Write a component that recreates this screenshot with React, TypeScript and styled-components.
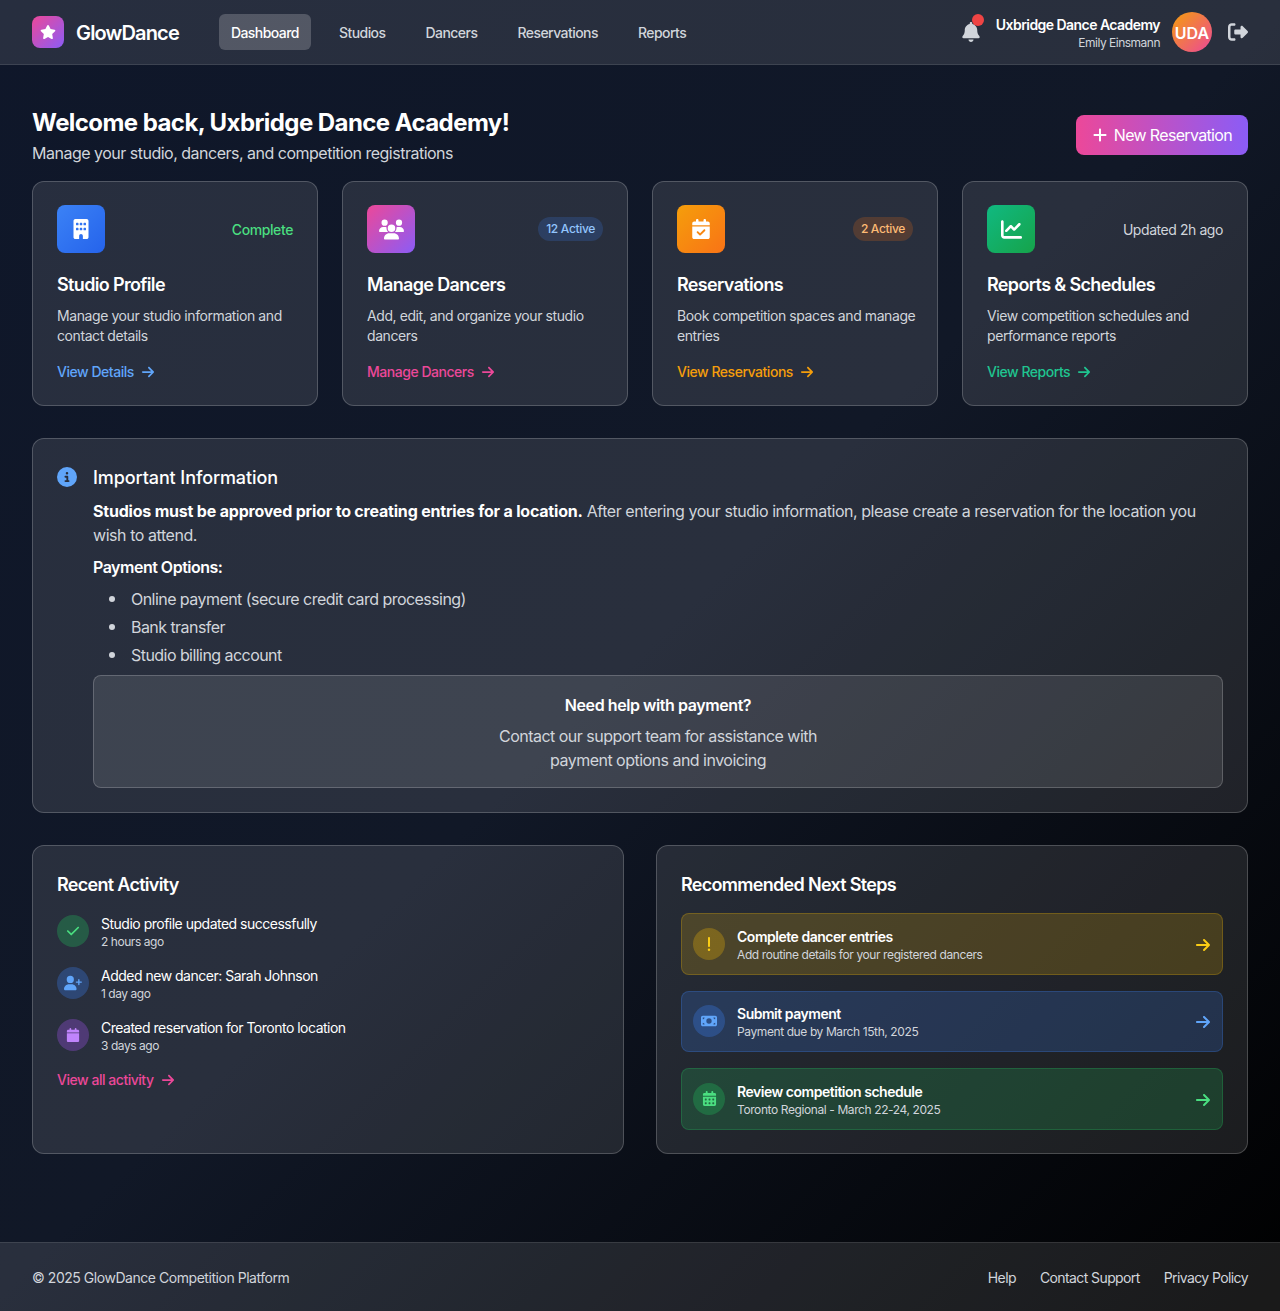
import React from 'react';
import styled, { createGlobalStyle } from 'styled-components';
import {
  FaArrowRight,
  FaBell,
  FaBuilding,
  FaCalendar,
  FaCalendarCheck,
  FaCalendarDays,
  FaChartLine,
  FaCheck,
  FaCircleInfo,
  FaExclamation,
  FaMoneyBill,
  FaPlus,
  FaRightFromBracket,
  FaStar,
  FaUserPlus,
  FaUsers
} from 'react-icons/fa6';

const GlobalStyle = createGlobalStyle`
  * {
    box-sizing: border-box;
  }

  html, body {
    margin: 0;
    padding: 0;
  }

  body {
    font-family: Inter, 'Noto Sans', sans-serif;
    color: #fff;
    background: #000;
  }
`;

const TINTS = {
  blue: { text: '#60a5fa', rgb: '59, 130, 246', from: '#3b82f6', to: '#2563eb' },
  pink: { text: '#ec4899', rgb: '236, 72, 153', from: '#ec4899', to: '#8b5cf6' },
  orange: { text: '#f59e0b', rgb: '249, 115, 22', from: '#f59e0b', to: '#f97316' },
  green: { text: '#1fc590', rgb: '34, 197, 94', from: '#10b981', to: '#16a34a' },
  yellow: { text: '#facc15', rgb: '234, 179, 8', from: '#eab308', to: '#eab308' },
  purple: { text: '#c084fc', rgb: '168, 85, 247', from: '#a855f7', to: '#a855f7' },
  lime: { text: '#4ade80', rgb: '34, 197, 94', from: '#22c55e', to: '#22c55e' }
};

type Tint = keyof typeof TINTS;

const cards: {
  tint: Tint;
  icon: React.ReactNode;
  title: string;
  text: string;
  link: string;
  status: React.ReactNode;
}[] = [
  {
    tint: 'blue',
    icon: <FaBuilding size={20} />,
    title: 'Studio Profile',
    text: 'Manage your studio information and contact details',
    link: 'View Details',
    status: <StatusDone>Complete</StatusDone>
  },
  {
    tint: 'pink',
    icon: <FaUsers size={25} />,
    title: 'Manage Dancers',
    text: 'Add, edit, and organize your studio dancers',
    link: 'Manage Dancers',
    status: <Badge $tone="blue">12 Active</Badge>
  },
  {
    tint: 'orange',
    icon: <FaCalendarCheck size={20} />,
    title: 'Reservations',
    text: 'Book competition spaces and manage entries',
    link: 'View Reservations',
    status: <Badge $tone="orange">2 Active</Badge>
  },
  {
    tint: 'green',
    icon: <FaChartLine size={21} />,
    title: 'Reports & Schedules',
    text: 'View competition schedules and performance reports',
    link: 'View Reports',
    status: <StatusMuted>Updated 2h ago</StatusMuted>
  }
];

const activity: { tint: Tint; icon: React.ReactNode; title: string; time: string }[] = [
  { tint: 'lime', icon: <FaCheck size={14} />, title: 'Studio profile updated successfully', time: '2 hours ago' },
  { tint: 'blue', icon: <FaUserPlus size={18} />, title: 'Added new dancer: Sarah Johnson', time: '1 day ago' },
  { tint: 'purple', icon: <FaCalendar size={14} />, title: 'Created reservation for Toronto location', time: '3 days ago' }
];

const steps: { tint: Tint; icon: React.ReactNode; title: string; text: string }[] = [
  { tint: 'yellow', icon: <FaExclamation size={16} />, title: 'Complete dancer entries', text: 'Add routine details for your registered dancers' },
  { tint: 'blue', icon: <FaMoneyBill size={16} />, title: 'Submit payment', text: 'Payment due by March 15th, 2025' },
  { tint: 'lime', icon: <FaCalendarDays size={15} />, title: 'Review competition schedule', text: 'Toronto Regional - March 22-24, 2025' }
];

export default function App() {
  return (
    <Page>
      <GlobalStyle />
      <Header>
        <HeaderLeft>
          <Brand>
            <BrandMark>
              <FaStar size={16} />
            </BrandMark>
            <BrandName>GlowDance</BrandName>
          </Brand>
          <Nav>
            <NavItem $active>Dashboard</NavItem>
            <NavItem>Studios</NavItem>
            <NavItem>Dancers</NavItem>
            <NavItem>Reservations</NavItem>
            <NavItem>Reports</NavItem>
          </Nav>
        </HeaderLeft>
        <HeaderRight>
          <BellButton>
            <FaBell size={20} />
            <BellDot />
          </BellButton>
          <UserBlock>
            <UserName>Uxbridge Dance Academy</UserName>
            <UserSub>Emily Einsmann</UserSub>
          </UserBlock>
          <Avatar>UDA</Avatar>
          <LogoutButton>
            <FaRightFromBracket size={20} />
          </LogoutButton>
        </HeaderRight>
      </Header>

      <Main>
        <TopRow>
          <div>
            <PageTitle>Welcome back, Uxbridge Dance Academy!</PageTitle>
            <PageSub>Manage your studio, dancers, and competition registrations</PageSub>
          </div>
          <PrimaryButton>
            <FaPlus size={16} />
            New Reservation
          </PrimaryButton>
        </TopRow>

        <CardGrid>
          {cards.map(card => (
            <Card key={card.title}>
              <CardTop>
                <CardIcon $tint={card.tint}>{card.icon}</CardIcon>
                {card.status}
              </CardTop>
              <CardTitle>{card.title}</CardTitle>
              <CardText>{card.text}</CardText>
              <CardLink $tint={card.tint}>
                {card.link}
                <FaArrowRight size={14} />
              </CardLink>
            </Card>
          ))}
        </CardGrid>

        <InfoPanel>
          <InfoIcon>
            <FaCircleInfo size={20} />
          </InfoIcon>
          <InfoBody>
            <InfoTitle>Important Information</InfoTitle>
            <InfoText>
              <strong>Studios must be approved prior to creating entries for a location.</strong> After entering your
              studio information, please create a reservation for the location you wish to attend.
            </InfoText>
            <InfoLabel>Payment Options:</InfoLabel>
            <InfoList>
              <li>Online payment (secure credit card processing)</li>
              <li>Bank transfer</li>
              <li>Studio billing account</li>
            </InfoList>
            <HelpBox>
              <HelpTitle>Need help with payment?</HelpTitle>
              <HelpText>Contact our support team for assistance with payment options and invoicing</HelpText>
            </HelpBox>
          </InfoBody>
        </InfoPanel>

        <BottomGrid>
          <Panel>
            <PanelTitle>Recent Activity</PanelTitle>
            <ActivityList>
              {activity.map(item => (
                <ActivityRow key={item.title}>
                  <RoundIcon $tint={item.tint}>{item.icon}</RoundIcon>
                  <div>
                    <ActivityTitle>{item.title}</ActivityTitle>
                    <ActivityTime>{item.time}</ActivityTime>
                  </div>
                </ActivityRow>
              ))}
            </ActivityList>
            <CardLink $tint="pink">
              View all activity
              <FaArrowRight size={14} />
            </CardLink>
          </Panel>

          <Panel>
            <StepsTitle>Recommended Next Steps</StepsTitle>
            <StepList>
              {steps.map(step => (
                <StepRow key={step.title} $tint={step.tint}>
                  <RoundIcon $tint={step.tint}>{step.icon}</RoundIcon>
                  <StepBody>
                    <StepTitle>{step.title}</StepTitle>
                    <StepText>{step.text}</StepText>
                  </StepBody>
                  <StepArrow $tint={step.tint}>
                    <FaArrowRight size={16} />
                  </StepArrow>
                </StepRow>
              ))}
            </StepList>
          </Panel>
        </BottomGrid>
      </Main>

      <Footer>
        <span>© 2025 GlowDance Competition Platform</span>
        <FooterLinks>
          <span>Help</span>
          <span>Contact Support</span>
          <span>Privacy Policy</span>
        </FooterLinks>
      </Footer>
    </Page>
  );
}

function StatusDone({ children }: { children: React.ReactNode }) {
  return <StatusDoneText>{children}</StatusDoneText>;
}

function StatusMuted({ children }: { children: React.ReactNode }) {
  return <StatusMutedText>{children}</StatusMutedText>;
}

function Badge({ $tone, children }: { $tone: Tint; children: React.ReactNode }) {
  return <BadgePill $tone={$tone}>{children}</BadgePill>;
}

const Page = styled.div`
  min-height: 1311px;
  background: linear-gradient(135deg, #0f172a 0%, #111827 50%, #000 100%);
`;

const Header = styled.header`
  height: 65px;
  display: flex;
  align-items: center;
  justify-content: space-between;
  padding: 0 32px;
  background: rgba(255, 255, 255, 0.1);
  border-bottom: 1px solid rgba(255, 255, 255, 0.1);
`;

const HeaderLeft = styled.div`
  display: flex;
  align-items: center;
  gap: 40px;
`;

const Brand = styled.div`
  display: flex;
  align-items: center;
  gap: 12px;
`;

const BrandMark = styled.div`
  width: 32px;
  height: 32px;
  border-radius: 8px;
  display: flex;
  align-items: center;
  justify-content: center;
  background: linear-gradient(135deg, #ec4899, #8b5cf6);
  color: #fff;
`;

const BrandName = styled.span`
  padding-top: 2px;
  font-size: 20px;
  line-height: 28px;
  font-weight: 600;
  letter-spacing: -0.85px;
`;

const Nav = styled.nav`
  display: flex;
  gap: 16px;
`;

const NavItem = styled.a<{ $active?: boolean }>`
  padding: 9px 12px 7px;
  border-radius: 6px;
  font-size: 14px;
  line-height: 20px;
  font-weight: 500;
  letter-spacing: -0.55px;
  color: ${p => (p.$active ? '#fff' : '#d1d5db')};
  background: ${p => (p.$active ? 'rgba(255, 255, 255, 0.2)' : 'transparent')};
`;

const HeaderRight = styled.div`
  display: flex;
  align-items: center;
`;

const BellButton = styled.div`
  position: relative;
  display: flex;
  color: #d1d5db;
  margin-right: 15px;
`;

const BellDot = styled.span`
  position: absolute;
  top: -8px;
  right: -3px;
  width: 12px;
  height: 12px;
  border-radius: 50%;
  background: #ef4444;
`;

const UserBlock = styled.div`
  padding-top: 2px;
  text-align: right;
  margin-right: 12px;
`;

const UserName = styled.div`
  font-size: 14px;
  line-height: 20px;
  font-weight: 600;
  letter-spacing: -0.55px;
`;

const UserSub = styled.div`
  font-size: 12px;
  line-height: 16px;
  letter-spacing: -0.5px;
  color: #d1d5db;
`;

const Avatar = styled.div`
  width: 40px;
  height: 40px;
  padding-top: 1px;
  border-radius: 50%;
  display: flex;
  align-items: center;
  justify-content: center;
  font-size: 16px;
  font-weight: 600;
  background: linear-gradient(135deg, #f59e0b, #ec4899);
`;

const LogoutButton = styled.div`
  display: flex;
  color: #d1d5db;
  margin-left: 16px;
`;

const Main = styled.main`
  padding: 40px 32px 88px;
`;

const TopRow = styled.div`
  display: flex;
  align-items: center;
  justify-content: space-between;
  margin-bottom: 16px;
`;

const PageTitle = styled.h1`
  margin: 0;
  font-size: 24px;
  line-height: 36px;
  font-weight: 700;
  letter-spacing: -0.57px;
`;

const PageSub = styled.p`
  margin: 0;
  font-size: 16px;
  line-height: 24px;
  letter-spacing: -0.5px;
  color: #d1d5db;
`;

const PrimaryButton = styled.button`
  height: 40px;
  display: flex;
  align-items: center;
  gap: 6px;
  padding: 0 16px;
  border: 0;
  border-radius: 8px;
  color: #fff;
  font-family: inherit;
  font-size: 16px;
  letter-spacing: -0.67px;
  background: linear-gradient(90deg, #ec4899, #8b5cf6);
`;

const CardGrid = styled.div`
  display: grid;
  grid-template-columns: repeat(4, 1fr);
  gap: 24px;
  margin-bottom: 32px;
`;

const Card = styled.section`
  padding: 23px 24px 24px;
  height: 225px;
  border-radius: 12px;
  background: rgba(255, 255, 255, 0.1);
  border: 1px solid rgba(255, 255, 255, 0.2);
`;

const CardTop = styled.div`
  display: flex;
  align-items: center;
  justify-content: space-between;
  margin-bottom: 18px;
`;

const CardIcon = styled.div<{ $tint: Tint }>`
  width: 48px;
  height: 48px;
  border-radius: 8px;
  display: flex;
  align-items: center;
  justify-content: center;
  color: #fff;
  background: linear-gradient(135deg, ${p => TINTS[p.$tint].from}, ${p => TINTS[p.$tint].to});
`;

const StatusDoneText = styled.span`
  font-size: 14px;
  font-weight: 500;
  letter-spacing: -0.4px;
  color: #4ade80;
`;

const StatusMutedText = styled.span`
  font-size: 14px;
  letter-spacing: -0.43px;
  color: #d1d5db;
`;

const BadgePill = styled.span<{ $tone: Tint }>`
  padding: 4px 8px;
  border-radius: 999px;
  font-size: 12px;
  line-height: 16px;
  font-weight: 500;
  letter-spacing: -0.33px;
  background: ${p => `rgba(${TINTS[p.$tone].rgb}, 0.2)`};
  color: ${p => (p.$tone === 'blue' ? '#93c5fd' : '#fdba74')};
`;

const CardTitle = styled.h3`
  margin: 0 0 7px;
  font-size: 18px;
  line-height: 28px;
  font-weight: 600;
  letter-spacing: -0.65px;
`;

const CardText = styled.p`
  margin: 0 -6px 16px 0;
  font-size: 14px;
  line-height: 20px;
  letter-spacing: -0.42px;
  color: #d1d5db;
`;

const CardLink = styled.a<{ $tint: Tint }>`
  display: flex;
  align-items: center;
  gap: 7px;
  font-size: 14px;
  line-height: 20px;
  font-weight: 500;
  letter-spacing: -0.47px;
  color: ${p => TINTS[p.$tint].text};
`;

const InfoPanel = styled.section`
  display: flex;
  gap: 16px;
  padding: 24px;
  margin-bottom: 32px;
  border-radius: 12px;
  background: rgba(255, 255, 255, 0.1);
  border: 1px solid rgba(255, 255, 255, 0.2);
`;

const InfoIcon = styled.div`
  flex: none;
  height: 20px;
  margin-top: 4px;
  color: #60a5fa;
`;

const InfoBody = styled.div`
  flex: 1;
`;

const InfoTitle = styled.h3`
  margin: 1px 0 7px;
  font-size: 18px;
  line-height: 28px;
  font-weight: 500;
  letter-spacing: -0.1px;
`;

const InfoText = styled.p`
  margin: 0 0 8px;
  font-size: 16px;
  line-height: 24px;
  letter-spacing: -0.45px;
  color: #d1d5db;

  strong {
    color: #fff;
    font-weight: 700;
    letter-spacing: -0.2px;
  }
`;

const InfoLabel = styled.p`
  margin: 0 0 8px;
  font-size: 16px;
  line-height: 24px;
  font-weight: 600;
  letter-spacing: -0.5px;
`;

const InfoList = styled.ul`
  margin: 0 0 8px;
  padding: 0 0 0 16px;
  list-style: none;
  font-size: 16px;
  line-height: 24px;
  letter-spacing: -0.55px;
  color: #d1d5db;

  li {
    display: flex;
    align-items: center;
  }

  li::before {
    content: '';
    flex: none;
    width: 6px;
    height: 6px;
    margin-right: 16px;
    border-radius: 50%;
    background: #d1d5db;
  }

  li + li {
    margin-top: 4px;
  }
`;

const HelpBox = styled.div`
  padding: 17px 16px 15px;
  text-align: center;
  border-radius: 8px;
  background: rgba(255, 255, 255, 0.1);
  border: 1px solid rgba(255, 255, 255, 0.2);
`;

const HelpTitle = styled.div`
  margin-bottom: 7px;
  font-size: 16px;
  line-height: 24px;
  font-weight: 600;
  letter-spacing: -0.43px;
`;

const HelpText = styled.div`
  max-width: 340px;
  margin: 0 auto;
  font-size: 16px;
  line-height: 24px;
  letter-spacing: -0.52px;
  color: #d1d5db;
`;

const BottomGrid = styled.div`
  display: grid;
  grid-template-columns: repeat(2, 1fr);
  gap: 32px;
`;

const Panel = styled.section`
  height: 309px;
  padding: 24px;
  border-radius: 12px;
  background: rgba(255, 255, 255, 0.1);
  border: 1px solid rgba(255, 255, 255, 0.2);
`;

const PanelTitle = styled.h3`
  margin: 1px 0 16px;
  font-size: 18px;
  line-height: 28px;
  font-weight: 600;
  letter-spacing: -0.7px;
`;

const StepsTitle = styled(PanelTitle)`
  margin-bottom: 14px;
`;

const ActivityList = styled.div`
  display: flex;
  flex-direction: column;
  gap: 16px;
  margin-bottom: 15px;
`;

const ActivityRow = styled.div`
  min-height: 36px;
  display: flex;
  gap: 12px;
`;

const RoundIcon = styled.div<{ $tint: Tint }>`
  flex: none;
  width: 32px;
  height: 32px;
  border-radius: 50%;
  display: flex;
  align-items: center;
  justify-content: center;
  color: ${p => TINTS[p.$tint].text};
  background: ${p => `rgba(${TINTS[p.$tint].rgb}, 0.3)`};
`;

const ActivityTitle = styled.div`
  margin-bottom: 1px;
  font-size: 14px;
  line-height: 18px;
  letter-spacing: -0.5px;
`;

const ActivityTime = styled.div`
  font-size: 12px;
  line-height: 16px;
  letter-spacing: -0.45px;
  color: #d1d5db;
`;

const StepList = styled.div`
  display: flex;
  flex-direction: column;
  gap: 16px;
`;

const StepRow = styled.div<{ $tint: Tint }>`
  height: 61.5px;
  display: flex;
  align-items: center;
  gap: 12px;
  padding: 0 11px;
  border-radius: 8px;
  background: ${p => `rgba(${TINTS[p.$tint].rgb}, 0.2)`};
  border: 1px solid ${p => `rgba(${TINTS[p.$tint].rgb}, 0.25)`};
`;

const StepBody = styled.div`
  flex: 1;
  padding-top: 2px;
`;

const StepTitle = styled.div`
  font-size: 14px;
  line-height: 20px;
  font-weight: 600;
  letter-spacing: -0.48px;
`;

const StepText = styled.div`
  font-size: 12px;
  line-height: 16px;
  letter-spacing: -0.4px;
  color: #d1d5db;
`;

const StepArrow = styled.div<{ $tint: Tint }>`
  display: flex;
  padding-top: 2px;
  color: ${p => TINTS[p.$tint].text};
`;

const Footer = styled.footer`
  display: flex;
  align-items: center;
  justify-content: space-between;
  padding: 25px 32px 23px;
  font-size: 14px;
  line-height: 20px;
  letter-spacing: -0.46px;
  color: #d1d5db;
  background: rgba(255, 255, 255, 0.1);
  border-top: 1px solid rgba(255, 255, 255, 0.1);
`;

const FooterLinks = styled.div`
  display: flex;
  gap: 24px;
  letter-spacing: -0.6px;
`;
